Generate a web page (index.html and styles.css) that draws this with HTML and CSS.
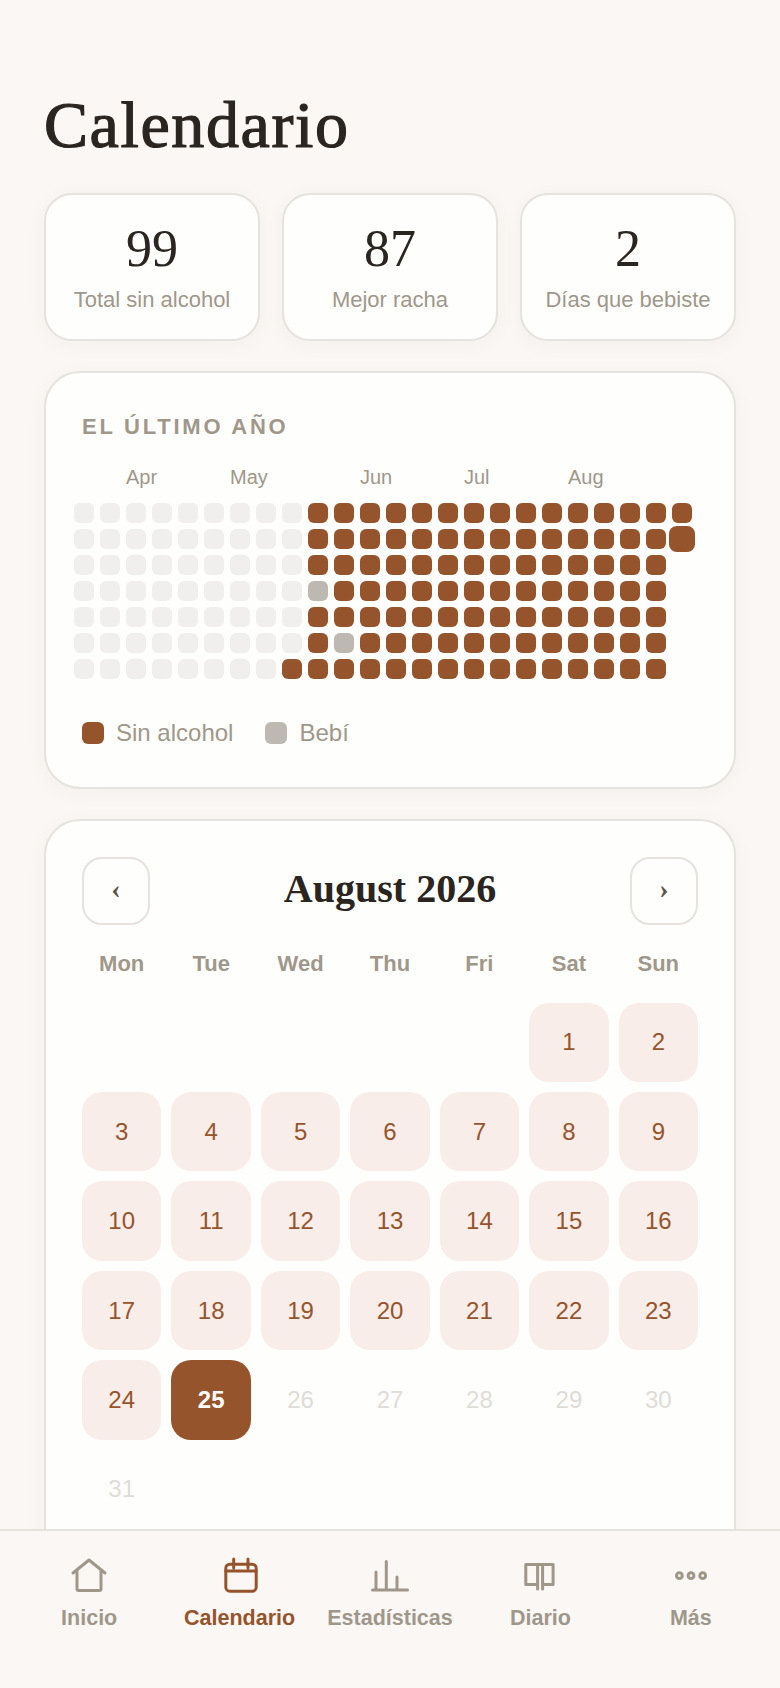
FILE: index.html
```html
<!DOCTYPE html>
<html lang="es">
<head>
<meta charset="utf-8">
<title>Calendario</title>
<link rel="stylesheet" href="styles.css">
</head>
<body>
<div class="app">
<main class="main">
<h1 class="title">Calendario</h1>
<section class="stats">
<div class="stat"><div class="stat-num">99</div><div class="stat-label">Total sin alcohol</div></div>
<div class="stat"><div class="stat-num">87</div><div class="stat-label">Mejor racha</div></div>
<div class="stat"><div class="stat-num">2</div><div class="stat-label">Días que bebiste</div></div>
</section>
<section class="card year">
<h2 class="year-title">EL ÚLTIMO AÑO</h2>
<div class="months"><span class="m-apr">Apr</span><span class="m-may">May</span><span class="m-jun">Jun</span><span class="m-jul">Jul</span><span class="m-aug">Aug</span></div>
<div class="heat">
<i class="e"></i><i class="e"></i><i class="e"></i><i class="e"></i><i class="e"></i><i class="e"></i><i class="e"></i>
<i class="e"></i><i class="e"></i><i class="e"></i><i class="e"></i><i class="e"></i><i class="e"></i><i class="e"></i>
<i class="e"></i><i class="e"></i><i class="e"></i><i class="e"></i><i class="e"></i><i class="e"></i><i class="e"></i>
<i class="e"></i><i class="e"></i><i class="e"></i><i class="e"></i><i class="e"></i><i class="e"></i><i class="e"></i>
<i class="e"></i><i class="e"></i><i class="e"></i><i class="e"></i><i class="e"></i><i class="e"></i><i class="e"></i>
<i class="e"></i><i class="e"></i><i class="e"></i><i class="e"></i><i class="e"></i><i class="e"></i><i class="e"></i>
<i class="e"></i><i class="e"></i><i class="e"></i><i class="e"></i><i class="e"></i><i class="e"></i><i class="e"></i>
<i class="e"></i><i class="e"></i><i class="e"></i><i class="e"></i><i class="e"></i><i class="e"></i><i class="e"></i>
<i class="e"></i><i class="e"></i><i class="e"></i><i class="e"></i><i class="e"></i><i class="e"></i><i class="b"></i>
<i class="b"></i><i class="b"></i><i class="b"></i><i class="d"></i><i class="b"></i><i class="b"></i><i class="b"></i>
<i class="b"></i><i class="b"></i><i class="b"></i><i class="b"></i><i class="b"></i><i class="d"></i><i class="b"></i>
<i class="b"></i><i class="b"></i><i class="b"></i><i class="b"></i><i class="b"></i><i class="b"></i><i class="b"></i>
<i class="b"></i><i class="b"></i><i class="b"></i><i class="b"></i><i class="b"></i><i class="b"></i><i class="b"></i>
<i class="b"></i><i class="b"></i><i class="b"></i><i class="b"></i><i class="b"></i><i class="b"></i><i class="b"></i>
<i class="b"></i><i class="b"></i><i class="b"></i><i class="b"></i><i class="b"></i><i class="b"></i><i class="b"></i>
<i class="b"></i><i class="b"></i><i class="b"></i><i class="b"></i><i class="b"></i><i class="b"></i><i class="b"></i>
<i class="b"></i><i class="b"></i><i class="b"></i><i class="b"></i><i class="b"></i><i class="b"></i><i class="b"></i>
<i class="b"></i><i class="b"></i><i class="b"></i><i class="b"></i><i class="b"></i><i class="b"></i><i class="b"></i>
<i class="b"></i><i class="b"></i><i class="b"></i><i class="b"></i><i class="b"></i><i class="b"></i><i class="b"></i>
<i class="b"></i><i class="b"></i><i class="b"></i><i class="b"></i><i class="b"></i><i class="b"></i><i class="b"></i>
<i class="b"></i><i class="b"></i><i class="b"></i><i class="b"></i><i class="b"></i><i class="b"></i><i class="b"></i>
<i class="b"></i><i class="b"></i><i class="b"></i><i class="b"></i><i class="b"></i><i class="b"></i><i class="b"></i>
<i class="b"></i><i class="b"></i><i class="b"></i><i class="b"></i><i class="b"></i><i class="b"></i><i class="b"></i>
<i class="b"></i><i class="b today"></i>
</div>
<div class="legend">
<span class="legend-item"><i class="swatch b"></i>Sin alcohol</span>
<span class="legend-item"><i class="swatch d"></i>Bebí</span>
</div>
</section>
<section class="card month">
<div class="month-head">
<button class="nav-btn" type="button">‹</button>
<div class="month-title">August 2026</div>
<button class="nav-btn" type="button">›</button>
</div>
<div class="weekdays"><span>Mon</span><span>Tue</span><span>Wed</span><span>Thu</span><span>Fri</span><span>Sat</span><span>Sun</span></div>
<div class="days">
<span class="blank"></span><span class="blank"></span><span class="blank"></span><span class="blank"></span><span class="blank"></span>
<span class="day sober">1</span><span class="day sober">2</span>
<span class="day sober">3</span><span class="day sober">4</span><span class="day sober">5</span><span class="day sober">6</span><span class="day sober">7</span><span class="day sober">8</span><span class="day sober">9</span>
<span class="day sober">10</span><span class="day sober">11</span><span class="day sober">12</span><span class="day sober">13</span><span class="day sober">14</span><span class="day sober">15</span><span class="day sober">16</span>
<span class="day sober">17</span><span class="day sober">18</span><span class="day sober">19</span><span class="day sober">20</span><span class="day sober">21</span><span class="day sober">22</span><span class="day sober">23</span>
<span class="day sober">24</span><span class="day current">25</span><span class="day future">26</span><span class="day future">27</span><span class="day future">28</span><span class="day future">29</span><span class="day future">30</span>
<span class="day future">31</span>
</div>
</section>
</main>
<nav class="tabbar">
<a class="tab">
<svg class="tab-icon" viewBox="0 0 44 44"><path d="M6 20 22 7l16 13M10 17v19a1.5 1.5 0 0 0 1.5 1.5h21a1.5 1.5 0 0 0 1.5-1.5V17"/></svg>
<span>Inicio</span>
</a>
<a class="tab active">
<svg class="tab-icon" viewBox="0 0 44 44"><rect x="7.8" y="11.2" width="30.4" height="27" rx="4"/><path d="M15.7 6v9M30 6v9M7.8 18h30.4"/></svg>
<span>Calendario</span>
</a>
<a class="tab">
<svg class="tab-icon" viewBox="0 0 44 44"><path d="M4.5 37h35M8 37V19M18.3 37V8.5M29 37V24"/></svg>
<span>Estadísticas</span>
</a>
<a class="tab">
<svg class="tab-icon" viewBox="0 0 44 44"><path d="M19.6 11.5H7.8v20h11.8zM24.6 11.5h10.5v20H24.6zM19.6 11.5h5M19.6 31.5V36M24.6 31.5V36"/></svg>
<span>Diario</span>
</a>
<a class="tab">
<svg class="tab-icon" viewBox="0 0 44 44"><circle cx="10.4" cy="22.7" r="2.9"/><circle cx="22" cy="22.7" r="2.9"/><circle cx="33.7" cy="22.7" r="2.9"/></svg>
<span>Más</span>
</a>
</nav>
</div>
</body>
</html>
```
FILE: styles.css
```css
* { box-sizing: border-box; }
html, body { margin: 0; padding: 0; }
body { background: #faf7f5; font-family: "Liberation Sans", Arial, sans-serif; color: #2a2520; }
.app { height: 1688px; display: flex; flex-direction: column; overflow: hidden; }
.main { flex: 1; min-height: 0; overflow: hidden; padding: 86px 44px 0; }
.title { margin: 0 0 30px; font-family: "Liberation Serif", serif; font-size: 66px; line-height: 77px; font-weight: 400; letter-spacing: 1.6px; color: #2a2520; -webkit-text-stroke: 1.2px #2a2520; }
.stats { display: grid; grid-template-columns: repeat(3, 1fr); gap: 22px; margin-bottom: 30px; }
.stat { height: 148px; background: #fefefc; border: 2px solid #e6e2dd; border-radius: 28px; box-shadow: 0 4px 20px rgba(60, 40, 20, .04); display: flex; flex-direction: column; align-items: center; padding-top: 24px; }
.stat-num { font-family: "Liberation Serif", serif; font-size: 52px; line-height: 60px; color: #2a2520; }
.stat-label { margin-top: 7px; font-size: 22px; line-height: 28px; color: #a0978b; }
.card { background: #fefefc; border: 2px solid #e6e2dd; border-radius: 36px; box-shadow: 0 4px 20px rgba(60, 40, 20, .04); padding: 36px; }
.year { height: 418px; margin-bottom: 30px; padding: 0 0 0 36px; }
.year-title { margin: 40px 0 0; font-size: 22px; line-height: 28px; font-weight: 700; letter-spacing: 2.75px; color: #a0978b; }
.months { display: grid; grid-template-columns: repeat(24, 20px); column-gap: 6px; margin: 24px 0 0 -8px; font-size: 20px; line-height: 24px; color: #a0978b; height: 24px; }
.m-apr { grid-column: 3 / span 4; }
.m-may { grid-column: 7 / span 4; }
.m-jun { grid-column: 12 / span 4; }
.m-jul { grid-column: 16 / span 4; }
.m-aug { grid-column: 20 / span 4; }
.heat { display: grid; grid-auto-flow: column; grid-template-rows: repeat(7, 20px); grid-auto-columns: 20px; gap: 6px; margin: 14px 0 0 -8px; }
.heat i { display: block; border-radius: 6px; }
.e { background: #f0efed; }
.b { background: #96542c; }
.d { background: #bdb8b1; }
.heat .today { transform: scale(1.3); }
.legend { display: flex; gap: 32px; margin-top: 40px; font-size: 24px; line-height: 28px; color: #a0978b; }
.legend-item { display: flex; align-items: center; gap: 12px; }
.swatch { width: 22px; height: 22px; border-radius: 6px; display: block; }
.month-head { display: flex; align-items: center; justify-content: space-between; }
.nav-btn { width: 68px; height: 68px; padding: 0 0 4px; background: transparent; border: 2px solid #e6e2dd; border-radius: 20px; font-family: "Liberation Serif", serif; font-size: 28px; font-weight: 700; color: #5c5248; }
.month-title { padding-bottom: 4px; font-family: "Liberation Serif", serif; font-size: 40px; line-height: 48px; font-weight: 700; color: #2a2520; }
.weekdays { display: grid; grid-template-columns: repeat(7, 1fr); column-gap: 10px; margin-top: 25px; font-size: 22px; line-height: 28px; font-weight: 700; color: #a0978b; text-align: center; }
.days { display: grid; grid-template-columns: repeat(7, 1fr); gap: 10px; margin-top: 24.5px; }
.blank { aspect-ratio: 1; }
.day { aspect-ratio: 1; border-radius: 20px; display: flex; align-items: center; justify-content: center; font-size: 24px; }
.sober { background: #f8ede8; color: #96542c; }
.current { background: #96542c; color: #fff; font-weight: 700; }
.future { color: #dfdcd7; }
.tabbar { flex: none; height: 159px; background: #faf7f5; border-top: 2px solid #e6e2dd; display: grid; grid-template-columns: repeat(5, 1fr); padding: 22px 14px 0; position: relative; }
.tab { display: flex; flex-direction: column; align-items: center; gap: 8px; font-size: 21.5px; line-height: 26px; font-weight: 700; color: #a0978b; }
.tab.active { color: #96542c; }
.tab-icon { width: 44px; height: 44px; fill: none; stroke: currentColor; stroke-width: 3; stroke-linecap: round; stroke-linejoin: round; }
```
